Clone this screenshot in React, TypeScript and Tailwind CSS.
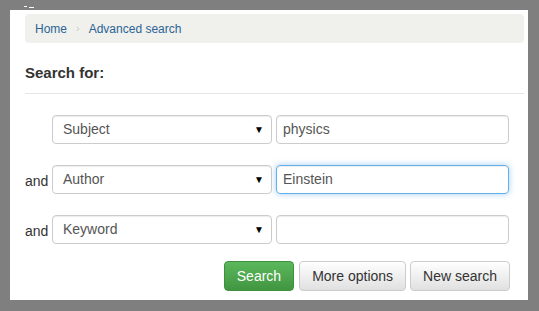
const rows = [
  { label: "", field: "Subject", value: "physics", focus: false },
  { label: "and", field: "Author", value: "Einstein", focus: true },
  { label: "and", field: "Keyword", value: "", focus: false },
]

const App = () => {
  return (
    <div className="w-[539px] h-[311px] bg-[#7f7f7f] overflow-hidden font-['Liberation_Sans',Arial,sans-serif]">
      <div className="h-[10px] flex items-start pl-[24px] pt-[6px] gap-[2px]">
        <span className="w-[3px] h-[1px] bg-white mt-[0px]" />
        <span className="w-[5px] h-[1px] bg-white mt-[1px]" />
      </div>
      <div className="ml-[10px] w-[518px] h-[290px] bg-white pl-[15px] pr-[4px] pt-[4px]">
        <div className="h-[29px] rounded-[4px] bg-[#f0f0ec] flex items-center px-[10px] text-[12px]">
          <span className="text-[#2a6496]">Home</span>
          <span className="text-[#cccccc] px-[9px] text-[11px]">›</span>
          <span className="text-[#2a6496]">Advanced search</span>
        </div>
        <div className="h-[51px] flex items-center border-b border-[#e5e5e5] pt-[11px]">
          <h2 className="text-[15px] font-bold text-[#333333]">Search for:</h2>
        </div>
        <div className="flex flex-col gap-[21px] pt-[21px]">
          {rows.map((r) => (
            <div key={r.field} className="flex items-center h-[29px] text-[14px]">
              <span className="w-[27px] text-[#333333] pt-[4px]">{r.label}</span>
              <div className="w-[220px] h-[29px] border border-[#cccccc] rounded-[4px] flex items-center justify-between pl-[10px] pr-[7px] text-[#555555] shadow-[inset_0_1px_1px_rgba(0,0,0,0.075)]">
                <span>{r.field}</span>
                <span className="text-[10px] text-black">▼</span>
              </div>
              <div
                className={
                  r.focus
                    ? "ml-[4px] w-[233px] h-[29px] border border-[#66afe9] rounded-[4px] flex items-center px-[6px] text-[#555555] shadow-[inset_0_1px_1px_rgba(0,0,0,0.075),0_0_6px_rgba(102,175,233,0.6)]"
                    : "ml-[4px] w-[233px] h-[29px] border border-[#cccccc] rounded-[4px] flex items-center px-[6px] text-[#555555] shadow-[inset_0_1px_1px_rgba(0,0,0,0.075)]"
                }
              >
                {r.value}
              </div>
            </div>
          ))}
        </div>
        <div className="flex justify-end pt-[17px] pr-[14px] text-[14px]">
          <button className="h-[30px] px-[12px] rounded-[4px] border border-[#3e8f3e] bg-gradient-to-b from-[#5cb85c] to-[#419641] text-white">
            Search
          </button>
          <button className="ml-[5px] h-[30px] px-[12px] rounded-[4px] border border-[#cccccc] bg-gradient-to-b from-white to-[#e0e0e0] text-[#333333]">
            More options
          </button>
          <button className="ml-[4px] h-[30px] px-[12px] rounded-[4px] border border-[#cccccc] bg-gradient-to-b from-white to-[#e0e0e0] text-[#333333]">
            New search
          </button>
        </div>
      </div>
    </div>
  )
}

export default App
